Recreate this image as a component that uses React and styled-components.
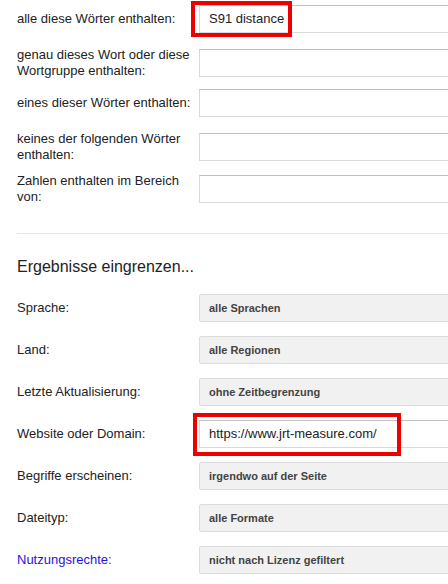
import React from "react";
import styled, { createGlobalStyle } from "styled-components";

const GlobalStyle = createGlobalStyle`
  html, body {
    margin: 0;
    padding: 0;
    background: #fff;
    overflow: hidden;
  }
  body {
    font-family: "Liberation Sans", Arial, sans-serif;
    color: #222;
  }
`;

const Page = styled.div`
  width: 448px;
  height: 584px;
  overflow: hidden;
  padding: 5px 0 0 17px;
  box-sizing: border-box;
`;

const Rows = styled.div`
  display: flex;
  flex-direction: column;
  gap: 14px;
`;

const Row = styled.div`
  display: grid;
  grid-template-columns: 182px 320px;
  align-items: center;
  height: 28px;
`;

const Label = styled.div`
  font-size: 13px;
  line-height: 16px;
  color: ${(p) => (p.link ? "#1f12e0" : "#222")};
  padding-right: 8px;
`;

const Control = styled.div`
  position: relative;
`;

const TextBox = styled.div`
  height: 28px;
  box-sizing: border-box;
  border: 1px solid #d9d9d9;
  border-top-color: #c0c0c0;
  background: #fff;
  padding: 0 9px;
  font-size: 13px;
  line-height: 26px;
  color: #222;
  white-space: nowrap;
`;

const Select = styled.div`
  height: 28px;
  box-sizing: border-box;
  border: 1px solid #dcdcdc;
  border-radius: 2px;
  background: #f1f1f1;
  padding: 0 9px;
  font-size: 11px;
  font-weight: bold;
  line-height: 26px;
  color: #444;
  white-space: nowrap;
`;

const Highlight = styled.div`
  position: absolute;
  left: ${(p) => p.left}px;
  top: ${(p) => p.top}px;
  width: ${(p) => p.w}px;
  height: ${(p) => p.h}px;
  border: 4px solid #ee0000;
  box-sizing: border-box;
  pointer-events: none;
`;

const Divider = styled.div`
  height: 1px;
  background: #e5e5e5;
  margin: 32px 0 0;
`;

const Heading = styled.div`
  font-size: 16px;
  line-height: 20px;
  color: #222;
  margin: 23px 0 17px;
`;

const words = [
  { label: "alle diese Wörter enthalten:", value: "S91 distance", mark: { left: -8, top: -4, w: 101, h: 36 } },
  { label: "genau dieses Wort oder diese Wortgruppe enthalten:" },
  { label: "eines dieser Wörter enthalten:" },
  { label: "keines der folgenden Wörter enthalten:" },
  { label: "Zahlen enthalten im Bereich von:" },
];

const filters = [
  { label: "Sprache:", select: "alle Sprachen" },
  { label: "Land:", select: "alle Regionen" },
  { label: "Letzte Aktualisierung:", select: "ohne Zeitbegrenzung" },
  { label: "Website oder Domain:", value: "https://www.jrt-measure.com/", mark: { left: -6, top: -7, w: 208, h: 43 } },
  { label: "Begriffe erscheinen:", select: "irgendwo auf der Seite" },
  { label: "Dateityp:", select: "alle Formate" },
  { label: "Nutzungsrechte:", select: "nicht nach Lizenz gefiltert", link: true },
];

function FieldRow({ item }) {
  return (
    <Row>
      <Label link={item.link}>{item.label}</Label>
      <Control>
        {item.select ? <Select>{item.select}</Select> : <TextBox>{item.value || ""}</TextBox>}
        {item.mark && <Highlight {...item.mark} />}
      </Control>
    </Row>
  );
}

export default function App() {
  return (
    <Page>
      <GlobalStyle />
      <Rows>
        {words.map((w, i) => (
          <FieldRow key={i} item={w} />
        ))}
      </Rows>
      <Divider />
      <Heading>Ergebnisse eingrenzen...</Heading>
      <Rows>
        {filters.map((f, i) => (
          <FieldRow key={i} item={f} />
        ))}
      </Rows>
    </Page>
  );
}
